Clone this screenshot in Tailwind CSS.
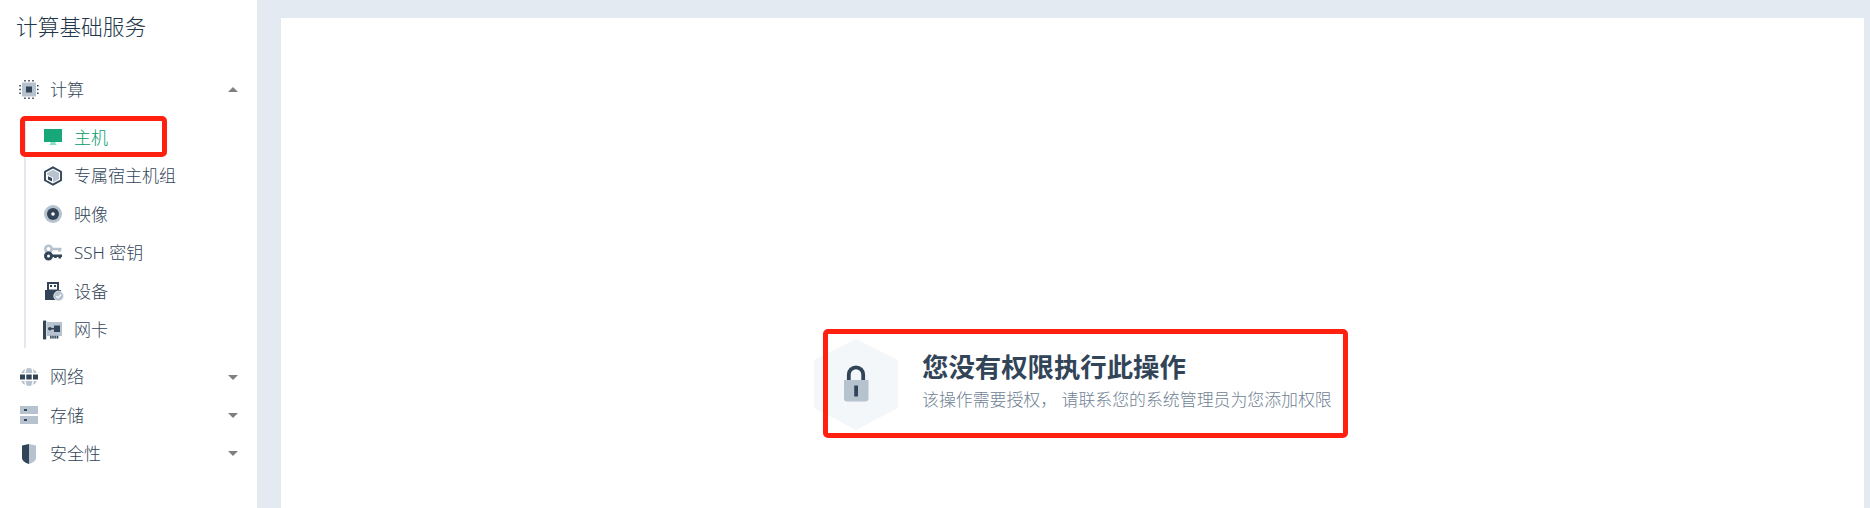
<!DOCTYPE html>
<html lang="zh-CN">
<head>
<meta charset="utf-8">
<title>计算基础服务</title>
<script src="https://cdn.jsdelivr.net/npm/@tailwindcss/browser@4"></script>
</head>
<body class="relative flex h-[508px] w-[1870px] overflow-hidden bg-[#e3eaf2] font-['Noto_Sans','Noto_Sans_CJK_SC',sans-serif] text-[17px] text-[#324558]">
<aside class="h-full w-[257px] shrink-0 bg-white">
  <h1 class="h-[70px] pt-[9px] pl-[16px] text-[21.7px] leading-[36px] font-light text-[#22364a]">计算基础服务</h1>
  <nav class="font-light">
    <div class="flex h-[39px] items-center pr-[19px] pl-[19px]">
      <svg class="h-5 w-5" viewBox="0 0 20 20"><path d="M3 2.500h14v14H3z" fill="#b6c3cf"/><path d="M7 6.500h6v6H7z" fill="#324558"/><path d="M6 0v1.500M10 0v1.500M14 0v1.500M6 17.500V19M10 17.500V19M14 17.500V19M.3 5.800h1.600M.3 9.500h1.600M.3 13.200h1.600M18 5.800h1.600M18 9.500h1.600M18 13.200h1.600" stroke="#324558" stroke-width="1.600"/></svg>
      <span class="ml-[11px] flex-1">计算</span>
      <svg class="h-[5px] w-[10px]" viewBox="0 0 10 5"><path d="M0 5L5 0l5 5z" fill="#808080"/></svg>
    </div>
    <ul class="mt-[9px] ml-[24px] h-[230px] border-l-2 border-[#e3e8ee]">
      <li class="flex h-[38.5px] items-center pl-[18px] text-[#009c68]">
        <svg class="h-[18px] w-[18px]" viewBox="0 0 18 18"><path d="M0 1h18v13H0z" fill="#16a878"/><path d="M6.500 14h5v1.500l1.500 1.500H5l1.500-1.500z" fill="#8ce0c2"/></svg>
        <span class="ml-[12px]">主机</span>
      </li>
      <li class="flex h-[38.5px] items-center pl-[18px]">
        <svg class="h-5 w-[18px]" viewBox="0 0 18 20"><path d="M9 1.300l8 4.400v8.600l-8 4.400-8-4.400V5.700z" fill="#fff" stroke="#324558" stroke-width="1.900"/><path d="M9 3.700l6 3.200v6.200l-6 3.400-6-3.400V6.900z" fill="#b6c3cf"/><path d="M2.800 8.600L9 11.500v6l-6.200-3.600z" fill="#fff"/><path d="M4 10.200l4 1.900v3.500l-4-2.100z" fill="#324558"/></svg>
        <span class="ml-[12px]">专属宿主机组</span>
      </li>
      <li class="flex h-[38.5px] items-center pl-[18px]">
        <svg class="h-[18px] w-[18px]" viewBox="0 0 18 18"><circle cx="9" cy="9" r="9" fill="#b6c3cf"/><circle cx="9" cy="9" r="6" fill="#324558"/><circle cx="9" cy="9" r="1.800" fill="#fff"/></svg>
        <span class="ml-[12px]">映像</span>
      </li>
      <li class="flex h-[38.5px] items-center pl-[18px]">
        <svg class="h-[18px] w-[18px]" viewBox="0 0 18 18"><path d="M6 5h11.500M15.500 5v2.700" stroke="#b6c3cf" stroke-width="2.600"/><circle cx="4.500" cy="5" r="3.200" fill="#fff" stroke="#b6c3cf" stroke-width="2.600"/><path d="M7 11.700h11M15.800 11.500v3M11.500 11.500v2.500" stroke="#324558" stroke-width="2.600"/><circle cx="4.500" cy="12" r="3" fill="#fff" stroke="#324558" stroke-width="3"/></svg>
        <span class="ml-[12px]">SSH 密钥</span>
      </li>
      <li class="flex h-[38.5px] items-center pl-[18px]">
        <svg class="h-5 w-5" viewBox="0 0 20 20"><path d="M3 1h12v8h2v10H1V9h2z" fill="#324558"/><path d="M5 3h8v5.500H5z" fill="#fff"/><path d="M6 4h2v2H6zM10 4h2v2h-2z" fill="#324558"/><circle cx="14.700" cy="15" r="5" fill="#b6c3cf" stroke="#fff" stroke-width=".6"/><path d="M12.200 15.100l1.800 1.700 3.200-3.500" fill="none" stroke="#fff" stroke-width="1.200"/></svg>
        <span class="ml-[10px]">设备</span>
      </li>
      <li class="flex h-[38.5px] items-center pl-[17px]">
        <svg class="h-5 w-5" viewBox="0 0 20 20"><path d="M4 2h15v14h-3v2.500H7V16H4z" fill="#b6c3cf"/><rect x="0" y=".5" width="3.200" height="19" rx=".8" fill="#324558"/><path d="M11 5.500h6v6.500h-6z" fill="#324558"/><path d="M7 8.700h4" stroke="#324558" stroke-width="1.500"/><circle cx="6.800" cy="8.700" r="1.800" fill="#324558"/><path d="M7.800 15.800v2.700M10 15.800v2.700M12.200 15.800v2.700M14.400 15.800v2.700" stroke="#324558" stroke-width="1.300"/></svg>
        <span class="ml-[11px]">网卡</span>
      </li>
    </ul>
    <div class="mt-[10px] flex h-[38.3px] items-center pr-[19px] pl-[20px]">
      <svg class="h-[18px] w-[18px]" viewBox="0 0 18 18"><circle cx="9" cy="9" r="9" fill="#b6c3cf"/><path d="M6 0C4.500 5 4.500 13 6 18M12 0c1.500 5 1.500 13 0 18" fill="none" stroke="#fff" stroke-width="1.300"/><path d="M0 5h18v8H0z" fill="#fff"/><path d="M0 6.500h5v5H0zM6.300 6.500h5.400v5H6.300zM13 6.500h5v5h-5z" fill="#324558"/></svg>
      <span class="ml-[12px] flex-1">网络</span>
      <svg class="h-[5px] w-[10px]" viewBox="0 0 10 5"><path d="M0 0l5 5 5-5z" fill="#808080"/></svg>
    </div>
    <div class="flex h-[38.3px] items-center pr-[19px] pl-[20px]">
      <svg class="h-[18px] w-[18px]" viewBox="0 0 18 18"><path d="M0 0h18v8H0zM0 10h18v8H0z" fill="#b6c3cf"/><path d="M4 3h3v2H4zM4 13h3v2H4z" fill="#324558"/></svg>
      <span class="ml-[12px] flex-1">存储</span>
      <svg class="h-[5px] w-[10px]" viewBox="0 0 10 5"><path d="M0 0l5 5 5-5z" fill="#808080"/></svg>
    </div>
    <div class="flex h-[38.3px] items-center pr-[19px] pl-[20px]">
      <svg class="h-5 w-[18px]" viewBox="0 0 18 20"><path d="M9 0L2 1.500V14c0 2.500 3 4.800 7 6z" fill="#324558"/><path d="M9 0l7 1.500V14c0 2.500-3 4.800-7 6z" fill="#b6c3cf"/></svg>
      <span class="ml-[12px] flex-1">安全性</span>
      <svg class="h-[5px] w-[10px]" viewBox="0 0 10 5"><path d="M0 0l5 5 5-5z" fill="#808080"/></svg>
    </div>
  </nav>
</aside>
<main class="mt-[18px] mr-[6px] ml-6 flex-1 bg-white pt-[321px] pl-[533px]">
  <section class="flex">
    <svg class="h-[91px] w-[84px] shrink-0" viewBox="0 0 84 91"><path d="M42 0l42 21v48L42 91 0 69V21z" fill="#f3f7fa"/><path d="M34.800 42v-6.500a7.200 7.200 0 0 1 14.400 0V42" fill="none" stroke="#324558" stroke-width="3.800"/><path d="M30 41h24.500v18.500a3 3 0 0 1-3 3H33a3 3 0 0 1-3-3z" fill="#b6c3cf"/><path d="M40.200 46.500h3.800v11h-3.800z" fill="#324558"/></svg>
    <div class="ml-6 pt-[9px] whitespace-nowrap">
      <h2 class="text-[26.4px] leading-[38px] font-bold text-[#324558]">您没有权限执行此操作</h2>
      <p class="text-[16.9px] leading-[28px] font-light text-[#708294]">该操作需要授权， 请联系您的系统管理员为您添加权限</p>
    </div>
  </section>
</main>
<div class="absolute top-[116px] left-[20px] h-[41px] w-[147px] rounded-[5px] border-[5px] border-[#ff2010]"></div>
<div class="absolute top-[329px] left-[823px] h-[109px] w-[525px] rounded-[5px] border-[5px] border-[#ff2010]"></div>
</body>
</html>
